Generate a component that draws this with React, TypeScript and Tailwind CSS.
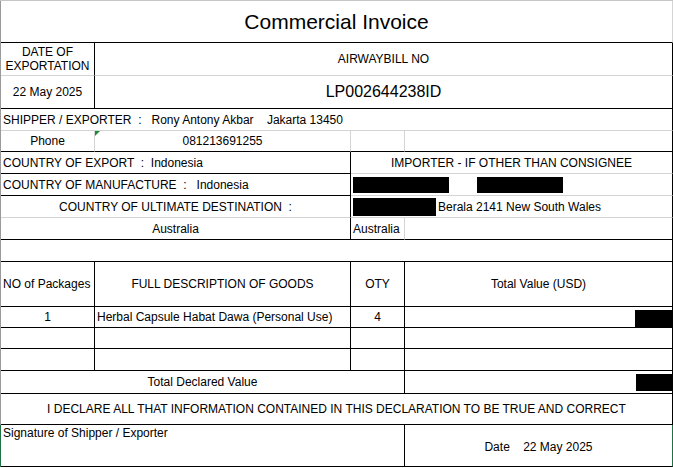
import type { ReactNode } from "react";

type Line = "k" | "g" | "green" | "none";

const rightLine: Record<Line, string> = {
  k: "border-r border-r-black",
  g: "border-r border-r-[#d4d4d4]",
  green: "border-r border-r-[#1e7145]",
  none: "",
};

const bottomLine: Record<Line, string> = {
  k: "border-b border-b-black",
  g: "border-b border-b-[#d4d4d4]",
  green: "border-b border-b-[#1e7145]",
  none: "",
};

function Cell({
  w,
  r = "k",
  b = "k",
  className = "",
  children,
}: {
  w: string;
  r?: Line;
  b?: Line;
  className?: string;
  children?: ReactNode;
}) {
  return (
    <div className={`${w} ${rightLine[r]} ${bottomLine[b]} h-full flex items-center whitespace-pre ${className}`}>
      {children}
    </div>
  );
}

function Row({ h, left = "gray", children }: { h: string; left?: "gray" | "green"; children: ReactNode }) {
  return (
    <div
      className={`flex ${h} border-l ${left === "green" ? "border-l-[#1e7145]" : "border-l-[#9a9a9a]"}`}
    >
      {children}
    </div>
  );
}

function Redacted({ className }: { className: string }) {
  return <span className={`bg-black inline-block ${className}`} />;
}

export default function App() {
  return (
    <div className="w-[673px] h-[468px] bg-white border-t border-t-[#c6c6c6] font-['Liberation_Sans',Arial,sans-serif] text-[12px] leading-[14px] text-black overflow-hidden">
      <Row h="h-[42px]">
        <Cell w="w-[672px]" r="g" className="justify-center text-[21px] leading-[24px]">
          Commercial Invoice
        </Cell>
      </Row>

      <Row h="h-[33px]">
        <Cell w="w-[94px]" b="g" className="justify-center text-center">
          <span className="whitespace-normal">
            DATE OF
            <br />
            EXPORTATION
          </span>
        </Cell>
        <Cell w="w-[578px]" b="g" className="justify-center">
          AIRWAYBILL NO
        </Cell>
      </Row>

      <Row h="h-[33px]">
        <Cell w="w-[94px]" className="justify-center">
          22 May 2025
        </Cell>
        <Cell w="w-[578px]" className="justify-center text-[16px] leading-[18px]">
          LP002644238ID
        </Cell>
      </Row>

      <Row h="h-[22px]">
        <Cell w="w-[672px]" b="g" className="pl-[2px]">
          {"SHIPPER / EXPORTER  :   Rony Antony Akbar    Jakarta 13450"}
        </Cell>
      </Row>

      <Row h="h-[21px]">
        <Cell w="w-[94px]" r="g" className="justify-center">
          Phone
        </Cell>
        <Cell w="w-[256px]" r="g" className="justify-center relative">
          <span className="absolute left-0 top-0 w-0 h-0 border-t-[5px] border-t-[#1f8b3a] border-r-[5px] border-r-transparent" />
          081213691255
        </Cell>
        <Cell w="w-[54px]" r="g" />
        <Cell w="w-[268px]" />
      </Row>

      <Row h="h-[22px]">
        <Cell w="w-[350px]" className="pl-[2px]">
          {"COUNTRY OF EXPORT  :  Indonesia"}
        </Cell>
        <Cell w="w-[322px]" b="g" className="justify-center">
          IMPORTER - IF OTHER THAN CONSIGNEE
        </Cell>
      </Row>

      <Row h="h-[22px]">
        <Cell w="w-[350px]" className="pl-[2px]">
          {"COUNTRY OF MANUFACTURE  :   Indonesia"}
        </Cell>
        <Cell w="w-[322px]" b="g" className="pl-[2px] gap-[28px]">
          <Redacted className="w-[96px] h-[16px]" />
          <Redacted className="w-[86px] h-[16px]" />
        </Cell>
      </Row>

      <Row h="h-[22px]">
        <Cell w="w-[350px]" b="g" className="justify-center">
          {"COUNTRY OF ULTIMATE DESTINATION  :"}
        </Cell>
        <Cell w="w-[322px]" b="g" className="pl-[2px] gap-[2px]">
          <Redacted className="w-[83px] h-[18px]" />
          <span>Berala 2141 New South Wales</span>
        </Cell>
      </Row>

      <Row h="h-[22px]">
        <Cell w="w-[350px]" className="justify-center">
          Australia
        </Cell>
        <Cell w="w-[54px]" r="g" className="pl-[2px]">
          Australia
        </Cell>
        <Cell w="w-[268px]" />
      </Row>

      <Row h="h-[22px]">
        <Cell w="w-[672px]" />
      </Row>

      <Row h="h-[45px]">
        <Cell w="w-[94px]" className="pl-[2px]">
          NO of Packages
        </Cell>
        <Cell w="w-[256px]" className="justify-center">
          FULL DESCRIPTION OF GOODS
        </Cell>
        <Cell w="w-[54px]" className="justify-center">
          OTY
        </Cell>
        <Cell w="w-[268px]" className="justify-center">
          Total Value (USD)
        </Cell>
      </Row>

      <Row h="h-[21px]">
        <Cell w="w-[94px]" className="justify-center">
          1
        </Cell>
        <Cell w="w-[256px]" className="pl-[2px]">
          Herbal Capsule Habat Dawa (Personal Use)
        </Cell>
        <Cell w="w-[54px]" className="justify-center">
          4
        </Cell>
        <Cell w="w-[268px]" className="justify-end items-end">
          <Redacted className="w-[37px] h-[17px]" />
        </Cell>
      </Row>

      <Row h="h-[21px]">
        <Cell w="w-[94px]" />
        <Cell w="w-[256px]" />
        <Cell w="w-[54px]" />
        <Cell w="w-[268px]" />
      </Row>

      <Row h="h-[22px]">
        <Cell w="w-[94px]" />
        <Cell w="w-[256px]" />
        <Cell w="w-[54px]" />
        <Cell w="w-[268px]" />
      </Row>

      <Row h="h-[23px]">
        <Cell w="w-[404px]" className="justify-center">
          Total Declared Value
        </Cell>
        <Cell w="w-[268px]" className="justify-end">
          <Redacted className="w-[36px] h-[17px]" />
        </Cell>
      </Row>

      <Row h="h-[31px]">
        <Cell w="w-[672px]" className="justify-center">
          I DECLARE ALL THAT INFORMATION CONTAINED IN THIS DECLARATION TO BE TRUE AND CORRECT
        </Cell>
      </Row>

      <Row h="h-[42px]" left="green">
        <Cell w="w-[404px]" className="items-start pl-[2px] pt-[1px]">
          Signature of Shipper / Exporter
        </Cell>
        <Cell w="w-[268px]" r="green" className="justify-center pt-[3px]">
          {"Date    22 May 2025"}
        </Cell>
      </Row>
    </div>
  );
}
